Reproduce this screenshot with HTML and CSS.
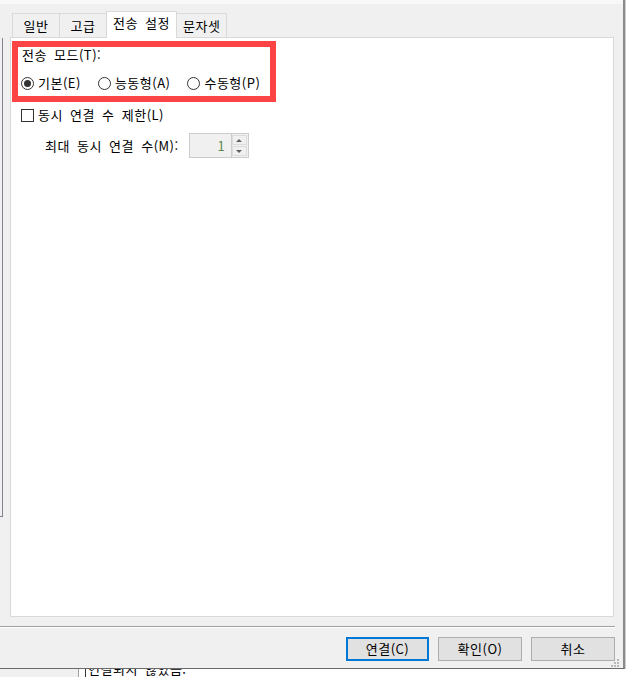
FILE: index.html
```html
<!DOCTYPE html>
<html lang="ko">
<head>
<meta charset="utf-8">
<title>전송 설정</title>
<link rel="stylesheet" href="styles.css">
</head>
<body>
<div class="screen">
  <div class="dialog">
    <div class="topstrip"></div>
    <div class="tabs">
      <div class="tab">일반</div>
      <div class="tab">고급</div>
      <div class="tab active">전송 설정</div>
      <div class="tab">문자셋</div>
    </div>
    <div class="body">
      <div class="gutter"><div class="ghost"></div></div>
      <div class="pane">
        <div class="mode-group">
          <div class="group-label">전송 모드(T):</div>
          <div class="radios">
            <div class="radio"><span class="rb checked"></span><span>기본(E)</span></div>
            <div class="radio"><span class="rb"></span><span>능동형(A)</span></div>
            <div class="radio"><span class="rb"></span><span>수동형(P)</span></div>
          </div>
        </div>
        <div class="check-row"><span class="cb"></span><span>동시 연결 수 제한(L)</span></div>
        <div class="max-row">
          <span class="max-label">최대 동시 연결 수(M):</span>
          <div class="spin">
            <div class="spin-field">1</div>
            <div class="spin-btns">
              <div class="spin-btn"><span class="arrow-up"></span></div>
              <div class="spin-btn"><span class="arrow-down"></span></div>
            </div>
          </div>
        </div>
      </div>
    </div>
    <div class="sep"></div>
    <div class="buttons">
      <div class="btn default">연결(C)</div>
      <div class="btn">확인(O)</div>
      <div class="btn">취소</div>
    </div>
    <svg class="grip" width="9" height="9" viewBox="0 0 9 9">
      <rect x="6" y="0" width="2" height="2" fill="#b9b9b9"/>
      <rect x="3" y="3" width="2" height="2" fill="#b9b9b9"/>
      <rect x="6" y="3" width="2" height="2" fill="#b9b9b9"/>
      <rect x="0" y="6" width="2" height="2" fill="#b9b9b9"/>
      <rect x="3" y="6" width="2" height="2" fill="#b9b9b9"/>
      <rect x="6" y="6" width="2" height="2" fill="#b9b9b9"/>
    </svg>
  </div>
  <div class="under">
    <div class="under-left"></div>
    <div class="under-main">
      <span class="caret"></span>
      <span class="under-text">연결되지 않았음.</span>
    </div>
  </div>
</div>
</body>
</html>
```

FILE: styles.css
```css
* { box-sizing: border-box; }

html, body {
  margin: 0;
  padding: 0;
}

body {
  font-family: "Noto Sans CJK KR", "Noto Sans", sans-serif;
  font-size: 13px;
  letter-spacing: 0.5px;
  word-spacing: 3px;
  color: #000;
  background: #cfcfcf;
}

.screen {
  width: 626px;
  height: 677px;
  overflow: hidden;
  background: #cfcfcf;
}

.dialog {
  position: relative;
  width: 625px;
  background: #f0f0f0;
  border-right: 2px solid #8a8a8a;
  border-bottom: 1px solid #6a6a6a;
  padding-bottom: 7px;
}

.topstrip {
  height: 4px;
  background: #f8f8f8;
}

.tabs {
  position: relative;
  z-index: 1;
  display: flex;
  align-items: flex-end;
  height: 27px;
  margin-top: 7px;
  margin-bottom: -1px;
  padding-left: 12px;
}

.tab {
  height: 24px;
  min-width: 48px;
  margin-bottom: 1px;
  margin-left: -1px;
  padding: 0 6px;
  border: 1px solid #d9d9d9;
  border-bottom: none;
  background: #f0f0f0;
  line-height: 23px;
  text-align: center;
  white-space: nowrap;
}

.tab:first-child { margin-left: 0; }

.tab.active {
  height: 27px;
  margin-bottom: 0;
  background: #fff;
  line-height: 22px;
}

.body {
  display: flex;
}

.gutter {
  width: 10px;
}

.ghost {
  width: 3px;
  height: 479px;
  margin-top: 1px;
  border-right: 1px solid #7f848e;
  border-bottom: 1px solid #7f848e;
}

.pane {
  width: 604px;
  height: 580px;
  background: #fff;
  border: 1px solid #d9d9d9;
}

.mode-group {
  width: 264px;
  height: 61px;
  margin: 3px 0 0 1px;
  border: 6px solid #fd4444;
}

.group-label {
  padding-left: 4px;
  line-height: 16px;
  white-space: nowrap;
}

.radios {
  display: flex;
  align-items: center;
  gap: 17px;
  height: 16px;
  margin-top: 12px;
  padding-left: 3px;
  white-space: nowrap;
}

.radio {
  display: flex;
  align-items: center;
  line-height: 16px;
}

.rb {
  position: relative;
  width: 13px;
  height: 13px;
  margin-right: 4px;
  border: 1px solid #333;
  border-radius: 50%;
  background: #fff;
}

.rb.checked::after {
  content: "";
  position: absolute;
  left: 2px;
  top: 2px;
  width: 7px;
  height: 7px;
  border-radius: 50%;
  background: #333;
}

.check-row {
  display: flex;
  align-items: center;
  height: 16px;
  margin-top: 5px;
  padding-left: 10px;
  line-height: 16px;
  white-space: nowrap;
}

.cb {
  width: 13px;
  height: 13px;
  margin-right: 4px;
  border: 1px solid #333;
  background: #fff;
}

.max-row {
  display: flex;
  align-items: center;
  height: 25px;
  margin-top: 10px;
  padding-left: 34px;
  white-space: nowrap;
}

.max-label {
  margin-right: 10px;
  line-height: 16px;
}

.spin {
  display: flex;
  height: 25px;
}

.spin-field {
  width: 43px;
  height: 25px;
  padding-right: 6px;
  border: 1px solid #cccccc;
  background: #f0f0f0;
  color: #5f8a52;
  text-align: right;
  line-height: 23px;
  letter-spacing: 0;
}

.spin-btns {
  display: flex;
  flex-direction: column;
  gap: 1px;
  width: 17px;
  height: 25px;
  padding: 1px 1px 1px 0;
  border: 1px solid #cccccc;
  border-left: none;
  background: #f0f0f0;
}

.spin-btn {
  flex: 1;
  display: flex;
  align-items: center;
  justify-content: center;
  border: 1px solid #dcdcdc;
  background: #f0f0f0;
}

.arrow-up {
  width: 0;
  height: 0;
  border-left: 3px solid transparent;
  border-right: 3px solid transparent;
  border-bottom: 3px solid #606060;
}

.arrow-down {
  width: 0;
  height: 0;
  border-left: 3px solid transparent;
  border-right: 3px solid transparent;
  border-top: 3px solid #606060;
}

.sep {
  width: 615px;
  height: 2px;
  margin-top: 9px;
  border-top: 1px solid #a0a0a0;
  border-bottom: 1px solid #ffffff;
}

.buttons {
  display: flex;
  justify-content: flex-end;
  gap: 9px;
  margin-top: 9px;
  padding-right: 8px;
}

.btn {
  width: 84px;
  height: 24px;
  border: 1px solid #adadad;
  background: #e1e1e1;
  text-align: center;
  line-height: 22px;
  white-space: nowrap;
}

.btn.default {
  width: 83px;
  border: 2px solid #0078d7;
  line-height: 20px;
}

.grip {
  position: absolute;
  left: 611px;
  top: 659px;
}

.under {
  display: flex;
  height: 8px;
  overflow: hidden;
}

.under-left {
  width: 79px;
  background: #f0f0f0;
  border-right: 1px solid #a0a0a0;
}

.under-main {
  display: flex;
  flex: 1;
  padding-left: 6px;
  background: #fff;
}

.caret {
  width: 1px;
  height: 8px;
  margin-right: 2px;
  background: #333;
}

.under-text {
  margin-top: -8px;
  line-height: 16px;
  white-space: nowrap;
}
```
